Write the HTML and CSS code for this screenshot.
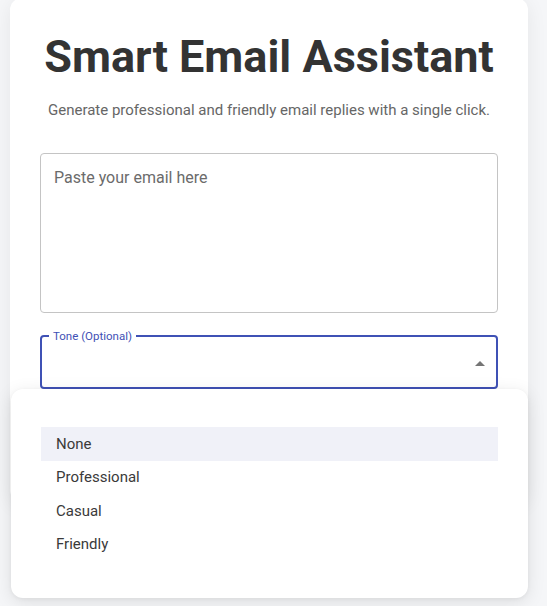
FILE: index.html
```html
<!DOCTYPE html>
<html lang="en">
<head>
<meta charset="utf-8">
<title>Smart Email Assistant</title>
<link rel="stylesheet" href="styles.css">
</head>
<body>
<div class="wrap">
  <div class="card">
    <h1 class="title">Smart Email Assistant</h1>
    <p class="subtitle">Generate professional and friendly email replies with a single click.</p>
    <div class="textarea">
      <div class="placeholder">Paste your email here</div>
    </div>
    <fieldset class="select">
      <legend>Tone (Optional)</legend>
      <div class="select-body">
        <svg class="arrow" width="10" height="5" viewBox="0 0 10 5"><path d="M0 5 L5 0 L10 5 Z" fill="#757575"/></svg>
      </div>
    </fieldset>
    <button class="generate">Generate Reply</button>
  </div>
  <ul class="menu">
    <li class="item selected">None</li>
    <li class="item">Professional</li>
    <li class="item">Casual</li>
    <li class="item">Friendly</li>
  </ul>
</div>
</body>
</html>
```
FILE: styles.css
```css
html, body {
  margin: 0;
  padding: 0;
}
body {
  background: #f5f6f8;
  font-family: Roboto, "Liberation Sans", Arial, sans-serif;
  height: 606px;
  overflow: hidden;
}
.wrap {
  position: relative;
  margin-left: 10px;
  width: 518px;
}
.card {
  margin-top: -2px;
  background: #fff;
  border-radius: 12px;
  box-shadow: 0 4px 20px rgba(0, 0, 0, 0.07);
  padding: 31.5px 30px 30px;
  display: flex;
  flex-direction: column;
}
.title {
  margin: 0;
  font-size: 45px;
  line-height: 54px;
  font-weight: 700;
  color: #333;
  text-align: center;
  white-space: nowrap;
}
.subtitle {
  margin: 15.5px 0 0;
  font-size: 15px;
  line-height: 22px;
  color: #666;
  text-align: center;
}
.textarea {
  margin-top: 32px;
  height: 160px;
  box-sizing: border-box;
  border: 1px solid #c4c4c4;
  border-radius: 4px;
  padding: 14px 13px;
}
.placeholder {
  font-size: 16px;
  line-height: 19px;
  color: #6b6b6b;
}
.select {
  margin: 16px 0 0;
  padding: 0 7px;
  border: 2px solid #3f51b5;
  border-radius: 4px;
  min-width: 0;
}
.select legend {
  padding: 0 4px;
  font-size: 11.5px;
  line-height: 14px;
  color: #3f51b5;
}
.select-body {
  height: 44px;
  display: flex;
  justify-content: flex-end;
  align-items: flex-start;
  padding-right: 4px;
}
.arrow {
  margin-top: 18px;
  display: block;
}
.generate {
  margin-top: 35px;
  height: 48px;
  border: none;
  border-radius: 4px;
  background: #3f51b5;
  color: #fff;
  font-family: inherit;
  font-size: 15px;
}
.menu {
  position: absolute;
  top: 391px;
  left: 1px;
  width: 517px;
  box-sizing: border-box;
  margin: 0;
  list-style: none;
  padding: 38px 30px 37px;
  background: #fff;
  border-radius: 12px;
  box-shadow: 0 4px 18px rgba(0, 0, 0, 0.1), 0 1px 4px rgba(0, 0, 0, 0.05);
}
.item {
  height: 33.5px;
  display: flex;
  align-items: center;
  padding: 0 15px;
  font-size: 15px;
  color: #3a3a3a;
}
.item.selected {
  background: #f0f1f8;
}
```
